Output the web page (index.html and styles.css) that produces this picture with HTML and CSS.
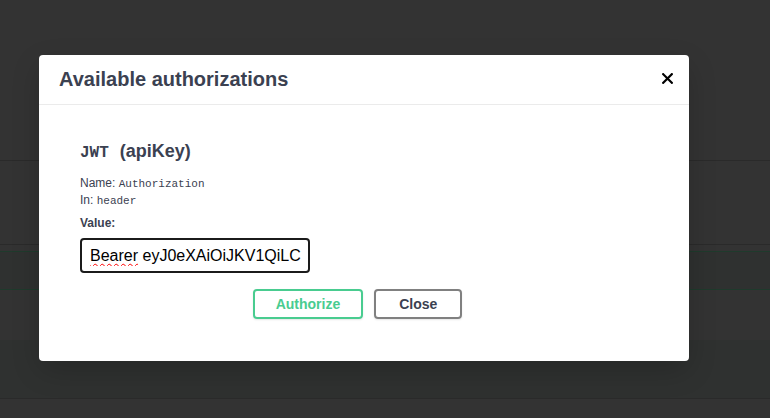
FILE: index.html
```html
<!DOCTYPE html>
<html lang="en">
<head>
<meta charset="utf-8">
<title>Available authorizations</title>
<link rel="stylesheet" href="styles.css">
</head>
<body>
<div class="page">
  <div class="band band-a"></div>
  <div class="line line-dark"></div>
  <div class="band band-b"></div>
  <div class="line line-dark"></div>
  <div class="band band-c"></div>
  <div class="line line-green"></div>
  <div class="band band-d"></div>
  <div class="line line-green"></div>
  <div class="band band-e"></div>
  <div class="band band-f"></div>
  <div class="line line-dark"></div>
  <div class="band band-g"></div>

  <div class="modal">
    <div class="modal-header">
      <h3 class="modal-title">Available authorizations</h3>
      <button class="close-btn" aria-label="Close">
        <svg width="11" height="11" viewBox="0 0 11 11"><path d="M1.2 1.2 L9.8 9.8 M9.8 1.2 L1.2 9.8" stroke="#000" stroke-width="2.2" stroke-linecap="square"/></svg>
      </button>
    </div>
    <div class="modal-body">
      <h4 class="scheme-title"><code class="scheme-code">JWT</code> (apiKey)</h4>
      <p class="meta">Name: <code class="mono">Authorization</code></p>
      <p class="meta">In: <code class="mono">header</code></p>
      <label class="value-label">Value:</label>
      <div class="input">
        <div class="input-text"><span class="spell">Bearer</span> eyJ0eXAiOiJKV1QiLC</div>
      </div>
      <div class="btn-row">
        <button class="btn btn-authorize">Authorize</button>
        <button class="btn btn-close">Close</button>
      </div>
    </div>
  </div>
</div>
</body>
</html>
```
FILE: styles.css
```css
html, body {
  margin: 0;
  padding: 0;
}
body {
  background: #333333;
  font-family: "Liberation Sans", Arial, sans-serif;
}
.page {
  position: relative;
  width: 770px;
  height: 418px;
  overflow: hidden;
  display: flex;
  flex-direction: column;
  background: #333333;
}
.band { flex: none; }
.line { flex: none; height: 1px; }
.line-dark { background: #2a2a2a; }
.line-green { background: #1f3a2c; }
.band-a { height: 160px; background: #333333; }
.band-b { height: 83px; background: #333333; }
.band-c { height: 6px; background: #333333; }
.band-d { height: 37px; background: #2f3130; }
.band-e { height: 50px; background: #333333; }
.band-f { height: 58px; background: #2f3130; }
.band-g { flex: 1; background: #333333; }

.modal {
  position: absolute;
  left: 39px;
  top: 55px;
  width: 650px;
  background: #ffffff;
  border-radius: 4px;
  box-shadow: 0 10px 30px -2px rgba(0, 0, 0, 0.2);
}
.modal-header {
  display: flex;
  align-items: center;
  justify-content: space-between;
  border-bottom: 1px solid #ebebeb;
  padding-right: 16px;
}
.modal-title {
  margin: 0;
  padding: 13px 20px;
  font-size: 20px;
  line-height: 23px;
  font-weight: 700;
  color: #3b4151;
}
.close-btn {
  border: none;
  background: none;
  padding: 0;
  margin: 0;
  width: 11px;
  height: 11px;
  display: flex;
  margin-top: -3px;
}
.modal-body {
  padding: 35px 41px 42px;
}
.scheme-title {
  margin: 0 0 11px;
  font-size: 18px;
  line-height: 22px;
  font-weight: 700;
  color: #3b4151;
}
.scheme-code {
  font-family: "Liberation Mono", "DejaVu Sans Mono", monospace;
  font-size: 16px;
  font-weight: 700;
  margin-right: 6px;
}
.meta {
  margin: 0;
  font-size: 12px;
  line-height: 16px;
  color: #3b4151;
}
.mono {
  font-family: "Liberation Mono", "DejaVu Sans Mono", monospace;
  font-size: 11px;
}
.value-label {
  display: block;
  margin-top: 6px;
  font-size: 12px;
  line-height: 16px;
  font-weight: 700;
  color: #3b4151;
}
.input {
  margin-top: 7px;
  box-sizing: border-box;
  width: 230px;
  height: 35px;
  border: 2px solid #1b1b1b;
  border-radius: 4px;
  padding: 0 6px 0 8px;
  display: flex;
  align-items: center;
}
.input-text {
  width: 212px;
  overflow: hidden;
  white-space: nowrap;
  font-size: 16px;
  line-height: 20px;
  color: #000000;
}
.spell {
  text-decoration-line: underline;
  text-decoration-style: wavy;
  text-decoration-color: #ff0000;
  text-decoration-thickness: 1px;
  text-decoration-skip-ink: none;
  text-underline-offset: 2px;
}
.btn-row {
  display: flex;
  justify-content: center;
  margin-top: 16px;
  padding-right: 2px;
}
.btn {
  box-sizing: border-box;
  height: 30px;
  margin: 0 11px 0 0;
  padding: 0 23px;
  border: 2px solid #808080;
  border-radius: 4px;
  background: transparent;
  font-family: "Liberation Sans", Arial, sans-serif;
  font-size: 14px;
  font-weight: 700;
  box-shadow: 0 1px 2px rgba(0, 0, 0, 0.1);
}
.btn-authorize {
  border-color: #49cc90;
  color: #49cc90;
  padding: 0 21px;
}
.btn-close {
  color: #3b4151;
}
```
